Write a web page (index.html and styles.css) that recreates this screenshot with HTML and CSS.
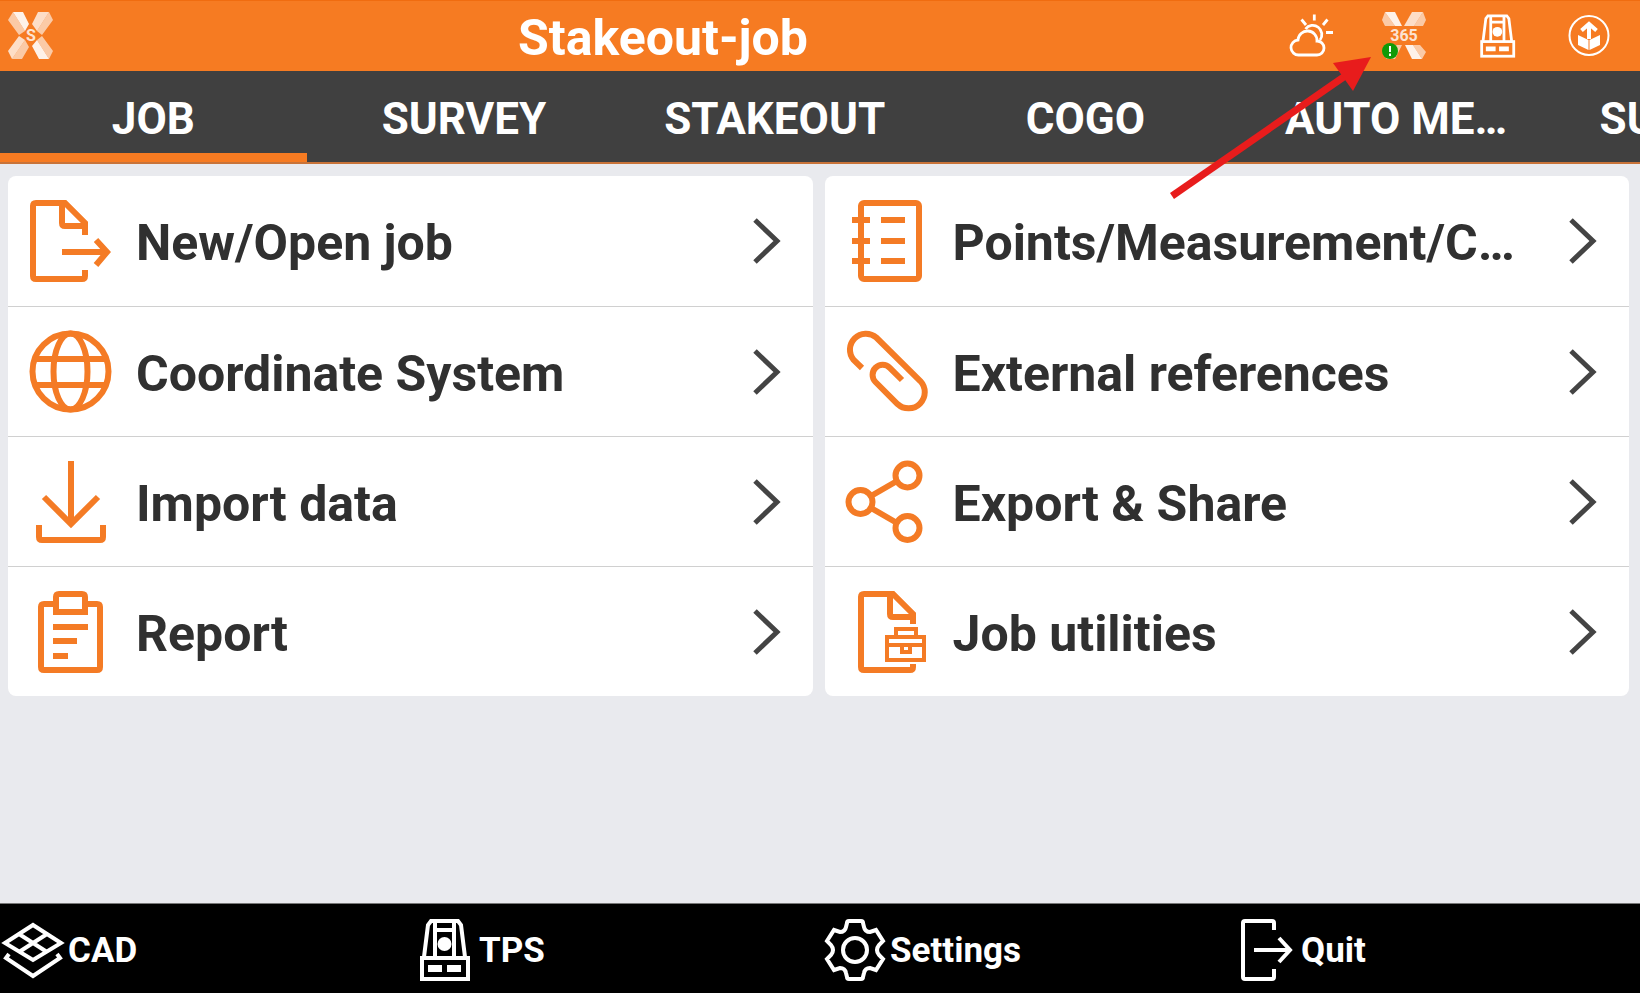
FILE: index.html
```
<!DOCTYPE html>
<html lang="en">
<head>
<title>Stakeout-job</title>
<meta charset="UTF-8">
<meta name="viewport" content="width=device-width, initial-scale=1.0">
<link rel="stylesheet" href="styles.css">
</head>

<body>

<!-- total station icon, used in the header and in the bottom bar -->
<svg class="defs" aria-hidden="true">
	<symbol id="tps" viewBox="0 0 66 66">
		<path d="M13 40 L17 8 L20 4 H47 L50 8 L54 40 M24 4 V40 M43 4 V40 M24 13 H43" fill="none" stroke="#fff" stroke-width="4"/>
		<rect x="11" y="41" width="46" height="21" fill="none" stroke="#fff" stroke-width="4"/>
		<circle cx="33.5" cy="27" r="7" fill="#fff" stroke="none"/>
		<path d="M17 48 H31 V55 H17 Z M36 48 H50 V55 H36 Z" fill="#fff" stroke="none"/>
	</symbol>
</svg>

<div id="wrapper">

	<header class="top_bar">
		<button class="logo" aria-label="Main menu">
			<svg width="46" height="48" viewBox="0 0 46 48">
				<path d="M5 0 H15 L21 12 L17 19 Z M24 34 L29 28 L41 47 H31 Z" fill="#fff" opacity=".9"/>
				<path d="M5 0 L0 8 L11 23 L17 19 Z M29 28 L34 24 L45 39 L41 47 Z" fill="#fff" opacity=".6"/>
				<path d="M30 0 H41 L29 19 L24 12 Z M11 24 L0 39 L4 47 L17 28 Z" fill="#fff" opacity=".75"/>
				<path d="M41 0 L45 8 L34 23 L29 19 Z M17 28 L21 35 L14 47 H4 Z" fill="#fff" opacity=".6"/>
				<text x="23" y="29" class="logo_s">S</text>
			</svg>
		</button>

		<h1>Stakeout-job</h1>

		<div class="status">
			<button aria-label="Weather">
				<svg width="46" height="48" viewBox="0 0 46 48" fill="none" stroke="#fff" stroke-width="2.8">
					<path d="M11 43 A7.5 7.5 0 0 1 10 28 A9.5 9.5 0 0 1 29 29 A7 7 0 0 1 29 43 Z"/>
					<path d="M17.5 17 A8.8 8.8 0 1 1 32 28"/>
					<path d="M26.3 2.5 V8.5 M13.5 7.5 L18 13 M39.5 7.5 L35 13 M38 20.5 H45"/>
				</svg>
			</button>
			<button aria-label="X-PAD 365">
				<svg width="46" height="48" viewBox="0 0 46 48">
					<path d="M4 0 L1 8 L4 14 H14 L4 0 Z M42 0 L45 8 L42 14 H33 Z" fill="#fff" opacity=".6"/>
					<path d="M4 0 H14 L21 14 H14 Z" fill="#fff" opacity=".9"/>
					<path d="M31 0 H42 L33 14 H23 Z" fill="#fff" opacity=".75"/>
					<path d="M24 33 H32 L41 47 H31 Z" fill="#fff" opacity=".9"/>
					<path d="M32 33 H39 L45 40 L41 47 Z M21 33 L14 47 H5 L12 33 Z" fill="#fff" opacity=".6"/>
					<text x="23" y="29" class="logo_365">365</text>
					<circle cx="9" cy="39" r="8" fill="#109a08"/>
					<path d="M9 34 V40 M9 41.5 V44" stroke="#fff" stroke-width="2"/>
				</svg>
			</button>
			<button aria-label="Total station">
				<svg width="46" height="46"><use href="#tps"/></svg>
			</button>
			<button aria-label="Update">
				<svg width="46" height="48" viewBox="0 0 46 48">
					<circle cx="22" cy="23.5" r="19.5" fill="none" stroke="#fff" stroke-width="2"/>
					<path d="M11 23 L21.5 28 V38 L11 33 Z M33 23 L22.5 28 V38 L33 33 Z" fill="#fff"/>
					<path d="M22 27 V12 M14.5 18.5 L22 12 L29.5 18.5" fill="none" stroke="#fff" stroke-width="4"/>
				</svg>
			</button>
		</div>
	</header>

	<nav class="tabs">
		<button class="active">JOB</button>
		<button>SURVEY</button>
		<button>STAKEOUT</button>
		<button>COGO</button>
		<button>AUTO ME…</button>
		<button>SURFACES</button>
	</nav>

	<main>
		<div class="box">
			<a href="#new">
				<svg class="icon" viewBox="0 0 84 84">
					<path d="M57 36 V24 L37 4 H8 Q5 4 5 7 V77 Q5 80 8 80 H54 Q57 80 57 77 V71 M34 4 V24 Q34 27 37 27 H57"/>
					<path d="M34 53 H78 M68 41 L79 53 L68 66"/>
				</svg>
				<span>New/Open job</span>
				<svg class="arrow" viewBox="0 0 30 48"><path d="M4 3 L26 24 L4 45"/></svg>
			</a>
			<a href="#coordinates">
				<svg class="icon" viewBox="0 0 84 84">
					<circle cx="42.5" cy="41.5" r="38"/>
					<ellipse cx="42.5" cy="41.5" rx="17" ry="38"/>
					<path d="M7 29 H78 M7 55 H78"/>
				</svg>
				<span>Coordinate System</span>
				<svg class="arrow" viewBox="0 0 30 48"><path d="M4 3 L26 24 L4 45"/></svg>
			</a>
			<a href="#import">
				<svg class="icon" viewBox="0 0 84 84">
					<path d="M43 1 V64 M16 37 L43 64 L70 37"/>
					<path d="M11 65 V77 Q11 80 14 80 H72 Q75 80 75 77 V65"/>
				</svg>
				<span>Import data</span>
				<svg class="arrow" viewBox="0 0 30 48"><path d="M4 3 L26 24 L4 45"/></svg>
			</a>
			<a href="#report">
				<svg class="icon" viewBox="0 0 84 84">
					<path d="M28 14 H16 Q13 14 13 17 V77 Q13 80 16 80 H69 Q72 80 72 77 V17 Q72 14 69 14 H57"/>
					<path d="M28 22 V7 Q28 4 31 4 H54 Q57 4 57 7 V22 Z M25 37 H60 M25 51 H49 M25 66 H40"/>
				</svg>
				<span>Report</span>
				<svg class="arrow" viewBox="0 0 30 48"><path d="M4 3 L26 24 L4 45"/></svg>
			</a>
		</div>

		<div class="box">
			<a href="#points">
				<svg class="icon" viewBox="0 0 84 84">
					<rect x="16" y="4" width="58" height="76" rx="3"/>
					<path d="M7 21 H25 M7 42 H25 M7 62 H25 M36 21 H60 M36 42 H60 M36 62 H60"/>
				</svg>
				<span>Points/Measurement/C…</span>
				<svg class="arrow" viewBox="0 0 30 48"><path d="M4 3 L26 24 L4 45"/></svg>
			</a>
			<a href="#references">
				<svg class="icon" viewBox="0 0 84 84">
					<path d="M17 38 L8.7 30 A16 16 0 0 1 31.3 7.5 L75.3 51 A16.2 16.2 0 0 1 52.5 74 L30.5 52 A10 10 0 0 1 44.8 37.8 L57 50"/>
				</svg>
				<span>External references</span>
				<svg class="arrow" viewBox="0 0 30 48"><path d="M4 3 L26 24 L4 45"/></svg>
			</a>
			<a href="#export">
				<svg class="icon" viewBox="0 0 84 84">
					<circle cx="15.5" cy="42" r="12"/>
					<circle cx="62.5" cy="15.5" r="12"/>
					<circle cx="62.5" cy="68" r="12"/>
					<path d="M26 36 L52 21 M26 48 L52 63"/>
				</svg>
				<span>Export &amp; Share</span>
				<svg class="arrow" viewBox="0 0 30 48"><path d="M4 3 L26 24 L4 45"/></svg>
			</a>
			<a href="#utilities">
				<svg class="icon" viewBox="0 0 84 84">
					<path d="M68 34 V24 L48 4 H19 Q16 4 16 7 V77 Q16 80 19 80 H65 Q68 80 68 77 V74 M45 4 V24 Q45 27 48 27 H68"/>
					<path class="thin" d="M42 47 H79 V70 H42 Z M42 55 H79 M51 47 V39 H71 V47 M57 55 V62 H65 V55"/>
				</svg>
				<span>Job utilities</span>
				<svg class="arrow" viewBox="0 0 30 48"><path d="M4 3 L26 24 L4 45"/></svg>
			</a>
		</div>
	</main>

	<footer class="bottom_bar">
		<button>
			<svg viewBox="0 0 66 66">
				<path d="M33 8 L61 26 L33 43 L5 26 Z M19 17 L47 35 M47 17 L19 35"/>
				<path d="M9 37 L6 41 L33 59 L60 41 L57 37"/>
			</svg>
			<span>CAD</span>
		</button>
		<button>
			<svg viewBox="0 0 66 66"><use href="#tps"/></svg>
			<span>TPS</span>
		</button>
		<button>
			<svg viewBox="0 0 66 66">
				<circle cx="33" cy="33" r="12"/>
				<path d="M27 4 H39 Q41 4 41 6 L42 10 Q43 15 48 15 L54 13 L61 24 L57 28 Q53 33 57 38 L61 42 L54 53 L48 51 Q43 51 42 56 L41 60 Q41 62 39 62 H27 Q25 62 25 60 L24 56 Q23 51 18 51 L12 53 L5 42 L9 38 Q13 33 9 28 L5 24 L12 13 L18 15 Q23 15 24 10 L25 6 Q25 4 27 4 Z"/>
			</svg>
			<span>Settings</span>
		</button>
		<button>
			<svg viewBox="0 0 66 66">
				<path d="M41 13 V6 Q41 4 39 4 H12 Q10 4 10 6 V60 Q10 62 12 62 H39 Q41 62 41 60 V52"/>
				<path d="M21 33 H57 M46 21 L57 33 L46 45"/>
			</svg>
			<span>Quit</span>
		</button>
	</footer>

	<!-- points at the 365 status icon -->
	<svg class="pointer" width="216" height="156" viewBox="0 0 216 156" aria-hidden="true">
		<path d="M8 146 L184 24" stroke="#e81c1c" stroke-width="7"/>
		<path d="M207 7 L169 13 L189 41 Z" fill="#e81c1c"/>
	</svg>

</div>

</body>
</html>
```

FILE: styles.css
```
* {
	box-sizing: border-box;
}

body {
	margin: 0;
	background-color: #e9eaee;
	font-family: Roboto, "Liberation Sans", sans-serif;
	font-weight: 700;
}

button {
	margin: 0;
	padding: 0;
	border: 0;
	background: none;
	color: #fff;
	font: inherit;
	cursor: pointer;
}

svg {
	display: block;
	flex: none;
}

.defs {
	position: absolute;
	width: 0;
	height: 0;
}

#wrapper {
	position: relative;
	display: flex;
	flex-direction: column;
	min-height: 100vh;
	overflow: hidden;
}

/**************************
/******HEADER
/**/
.top_bar {
	display: flex;
	align-items: center;
	height: 71px;
	padding-right: 4px;
	border-top: 1px solid #f06c10;
	background-color: #f67b22;
}

.logo {
	width: 62px;
	padding-left: 8px;
}

.logo_s,
.logo_365 {
	fill: #fff;
	font-size: 16px;
	text-anchor: middle;
	opacity: 0.8;
}

h1 {
	flex: 1;
	margin: 0;
	padding-top: 4px;
	color: #fff;
	font-size: 50px;
	line-height: 60px;
	text-align: center;
}

.status {
	display: flex;
}

.status button {
	display: flex;
	justify-content: center;
	align-items: center;
	width: 93px;
}

/**************************
/******TABS
/**/
.tabs {
	display: flex;
	gap: 4px;
	height: 93px;
	border-bottom: 2px solid #c87339;
	background-color: #404040;
	overflow: hidden;
}

.tabs button {
	flex: 0 0 18.7%;
	padding-top: 4px;
	font-size: 44px;
	white-space: nowrap;
}

.tabs .active {
	box-shadow: inset 0 -9px #f67b22;
}

/**************************
/******MENU
/**/
main {
	flex: 1;
	display: grid;
	grid-template-columns: 1fr 1fr;
	gap: 12px;
	align-items: start;
	padding: 12px 11px 12px 8px;
}

.box {
	min-width: 0;
	border-radius: 8px;
	background-color: #fff;
	overflow: hidden;
}

.box a {
	display: flex;
	align-items: center;
	gap: 24px;
	height: 130px;
	padding: 0 32px 0 20px;
	color: #303030;
	font-size: 50px;
	text-decoration: none;
}

.box a + a {
	border-top: 1px solid #d0d0d0;
}

.box span {
	flex: 1;
	padding-top: 4px;
	white-space: nowrap;
}

.icon {
	width: 84px;
	height: 84px;
	fill: none;
	stroke: #f47b25;
	stroke-width: 6px;
}

.icon .thin {
	stroke-width: 4px;
}

.arrow {
	width: 30px;
	height: 48px;
	fill: none;
	stroke: #444;
	stroke-width: 5px;
}

/**************************
/******BOTTOM BAR
/**/
.bottom_bar {
	display: grid;
	grid-template-columns: repeat(4, 1fr);
	gap: 4px;
	height: 90px;
	padding-top: 2px;
	border-top: 1px solid #777;
	background-color: #000;
}

.bottom_bar button {
	display: flex;
	align-items: center;
	gap: 2px;
	font-size: 35px;
}

.bottom_bar svg {
	width: 66px;
	height: 66px;
	fill: none;
	stroke: #fff;
	stroke-width: 4px;
}

.bottom_bar span {
	padding-top: 2px;
}

/* lies over the header, the tabs and the menu */
.pointer {
	position: absolute;
	top: 50px;
	right: 260px;
	pointer-events: none;
}
```
